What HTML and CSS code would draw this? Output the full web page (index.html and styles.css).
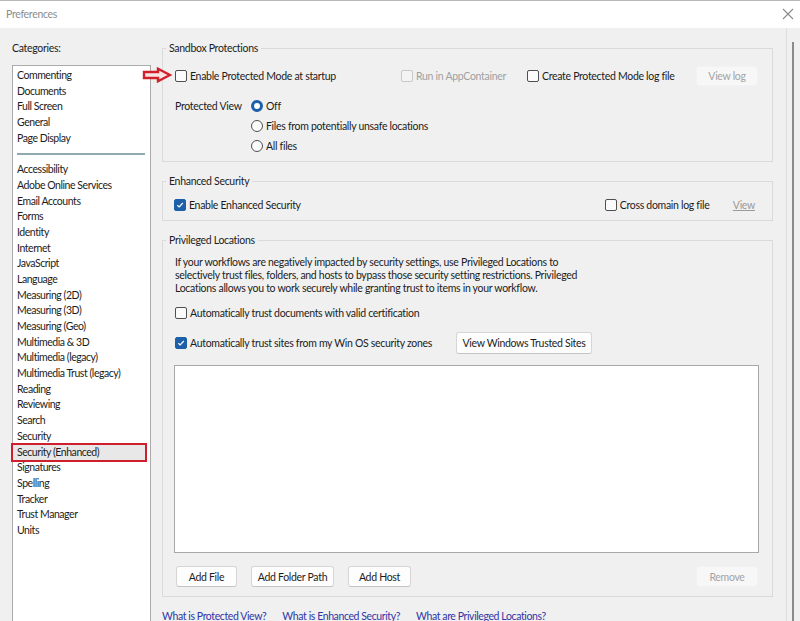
FILE: index.html
```html
<!DOCTYPE html>
<html lang="en">
<head>
  <meta charset="UTF-8">
  <meta name="viewport" content="width=device-width, initial-scale=1.0">
  <title>Preferences</title>
  <link rel="stylesheet" href="styles.css">
</head>
<body>
  <div class="window">
    <div class="titleBar">
      <span class="title">Preferences</span>
      <svg class="closeIcon" width="12" height="12" viewBox="0 0 12 12">
        <path d="M1 1L11 11M11 1L1 11" stroke="#8a8a8a" stroke-width="1.1" fill="none"/>
      </svg>
    </div>

    <div class="content">
      <div class="sidebar">
        <div class="catLabel">Categories:</div>
        <ul class="catList">
          <li>Commenting</li>
          <li>Documents</li>
          <li>Full Screen</li>
          <li>General</li>
          <li>Page Display</li>
          <li class="sep"></li>
          <li>Accessibility</li>
          <li>Adobe Online Services</li>
          <li>Email Accounts</li>
          <li>Forms</li>
          <li>Identity</li>
          <li>Internet</li>
          <li>JavaScript</li>
          <li>Language</li>
          <li>Measuring (2D)</li>
          <li>Measuring (3D)</li>
          <li>Measuring (Geo)</li>
          <li>Multimedia &amp; 3D</li>
          <li>Multimedia (legacy)</li>
          <li>Multimedia Trust (legacy)</li>
          <li>Reading</li>
          <li>Reviewing</li>
          <li>Search</li>
          <li>Security</li>
          <li class="selected">Security (Enhanced)</li>
          <li>Signatures</li>
          <li>Spelling</li>
          <li>Tracker</li>
          <li>Trust Manager</li>
          <li>Units</li>
        </ul>
      </div>

      <div class="main">
        <!-- sandbox -->
        <fieldset class="group sandbox">
          <legend>Sandbox Protections</legend>
          <div class="row startRow">
            <svg class="arrowMark" width="30" height="16" viewBox="0 0 30 16">
              <path d="M2 5H16V1.8L28 8L16 14.2V11H2Z" fill="#f7e4e4" stroke="#d2202a" stroke-width="2.4" stroke-linejoin="miter"/>
            </svg>
            <label class="check colA"><span class="box"></span>Enable Protected Mode at startup</label>
            <label class="check colB disabled"><span class="box"></span>Run in AppContainer</label>
            <label class="check colC"><span class="box"></span>Create Protected Mode log file</label>
            <button class="btn disabled logBtn">View log</button>
          </div>
          <div class="viewRow">
            <span class="viewLabel">Protected View</span>
            <div class="radios">
              <label class="radio on"><span class="dot"></span>Off</label>
              <label class="radio"><span class="dot"></span>Files from potentially unsafe locations</label>
              <label class="radio"><span class="dot"></span>All files</label>
            </div>
          </div>
        </fieldset>

        <!-- enhanced security -->
        <fieldset class="group enhanced">
          <legend>Enhanced Security</legend>
          <div class="row">
            <label class="check on grow"><span class="box"></span>Enable Enhanced Security</label>
            <label class="check crossLog"><span class="box"></span>Cross domain log file</label>
            <a class="viewLink">View</a>
          </div>
        </fieldset>

        <!-- privileged locations -->
        <fieldset class="group privileged">
          <legend>Privileged Locations</legend>
          <p class="intro">If your workflows are negatively impacted by security settings, use Privileged Locations to<br>
            selectively trust files, folders, and hosts to bypass those security setting restrictions. Privileged<br>
            Locations allows you to work securely while granting trust to items in your workflow.</p>
          <div class="row certRow">
            <label class="check"><span class="box"></span>Automatically trust documents with valid certification</label>
          </div>
          <div class="row sitesRow">
            <label class="check on sitesCheck"><span class="box"></span>Automatically trust sites from my Win OS security zones</label>
            <button class="btn sitesBtn">View Windows Trusted Sites</button>
          </div>
          <div class="locList"></div>
          <div class="row btnRow">
            <button class="btn addFile">Add File</button>
            <button class="btn addFolder">Add Folder Path</button>
            <button class="btn addHost">Add Host</button>
            <button class="btn disabled removeBtn">Remove</button>
          </div>
        </fieldset>

        <div class="links">
          <a>What is Protected View?</a>
          <a>What is Enhanced Security?</a>
          <a>What are Privileged Locations?</a>
        </div>
      </div>

      <div class="edge"></div>
    </div>
  </div>
</body>
</html>
```

FILE: styles.css
```css
* {
  box-sizing: border-box;
}
html, body {
  margin: 0;
  height: 100%;
}
body {
  font-family: Lato, "Noto Sans", sans-serif;
  font-size: 10.5px;
  letter-spacing: -0.3px;
  color: #1c1c1c;
  background: #f0f0f0;
  overflow: hidden;
}
.window {
  width: 800px;
  height: 621px;
  display: flex;
  flex-direction: column;
  background: #f0f0f0;
}
.titleBar {
  height: 28px;
  flex: none;
  background: #fff;
  border-top: 1px solid #b8b8b8;
  display: flex;
  align-items: center;
  justify-content: space-between;
  padding: 0 6px 1px;
}
.title {
  color: #8c8c8c;
}
.content {
  flex: 1;
  display: flex;
  min-height: 0;
}

/* categories */
.sidebar {
  width: 151px;
  flex: none;
  padding-left: 12px;
  display: flex;
  flex-direction: column;
}
.catLabel {
  height: 37px;
  padding-top: 13px;
  line-height: 14px;
}
.catList {
  list-style: none;
  margin: 0;
  padding: 2px 0 0;
  flex: 1;
  background: #fff;
  border: 1px solid #ababab;
  border-bottom: none;
  letter-spacing: -0.45px;
}
.catList li {
  height: 15.7px;
  line-height: 15.7px;
  padding-left: 4px;
  margin-right: 5px;
  white-space: nowrap;
}
.catList li.sep {
  display: flex;
  align-items: center;
}
.catList li.sep::after {
  content: "";
  flex: 1;
  height: 2px;
  background: #8eaab0;
}
.catList li.selected {
  background: #e8e8e8;
  outline: 2px solid #cf1f2c;
  outline-offset: 0;
}

/* right side */
.main {
  flex: 1;
  padding: 13px 13px 0 11px;
  display: flex;
  flex-direction: column;
  gap: 12px;
}
.group {
  margin: 0;
  padding: 0 12px;
  min-width: 0;
  border: 1px solid #dadada;
}
.group legend {
  margin-left: -9px;
  padding: 0 3px;
  line-height: 14px;
}
.row {
  display: flex;
  align-items: center;
}
.sandbox {
  padding-top: 10px;
  padding-bottom: 5px;
}
.startRow {
  position: relative;
  height: 21px;
}
.arrowMark {
  position: absolute;
  left: -33px;
  top: 2px;
}
.colA {
  width: 226px;
}
.colB {
  width: 126px;
}
.colC {
  flex: 1;
}
.logBtn {
  width: 62px;
  height: 20px;
  margin-right: 2px;
}
.viewRow {
  display: flex;
  margin-top: 10px;
}
.viewLabel {
  width: 76px;
  line-height: 20px;
}
.radios {
  display: flex;
  flex-direction: column;
}

/* checkbox and radio */
.check, .radio {
  display: flex;
  align-items: center;
  gap: 3px;
  height: 20px;
  white-space: nowrap;
}
.check .box {
  width: 12px;
  height: 12px;
  border: 1px solid #505050;
  border-radius: 2px;
  background: #fbfbfb;
  flex: none;
}
.check.on .box {
  border-color: #1d5fa9;
  background: #1d5fa9 url("data:image/svg+xml;utf8,<svg xmlns='http://www.w3.org/2000/svg' width='10' height='10' viewBox='0 0 10 10'><path d='M2.3 5.2L4.2 7L7.8 3' stroke='white' stroke-width='1.2' fill='none'/></svg>") center no-repeat;
}
.check.disabled {
  color: #a0a0a0;
}
.check.disabled .box {
  border-color: #c8c8c8;
  background: #f3f3f3;
}
.radio .dot {
  width: 12px;
  height: 12px;
  border: 1px solid #505050;
  border-radius: 50%;
  background: #fbfbfb;
  flex: none;
}
.radio.on .dot {
  border: 3.5px solid #1d5fa9;
  background: #fff;
}

/* buttons */
.btn {
  font: inherit;
  letter-spacing: inherit;
  color: #1c1c1c;
  background: #fdfdfd;
  border: 1px solid #d6d6d6;
  border-bottom-color: #c4c4c4;
  border-radius: 3px;
  padding: 0;
}
.btn.disabled {
  color: #a3a3a3;
  background: #f7f7f7;
  border-color: #f2f2f2;
}

.enhanced {
  padding-top: 7px;
  padding-bottom: 5px;
}
.enhanced .row {
  height: 20px;
}
.enhanced .check.on {
  margin-left: -1px;
}
.grow {
  flex: 1;
}
.crossLog {
  width: 128px;
}
.viewLink {
  color: #9a9a9a;
  text-decoration: underline;
  margin-right: 5px;
}

.privileged {
  padding-top: 9px;
  padding-bottom: 9px;
}
.intro {
  margin: 0;
  line-height: 13px;
}
.certRow {
  margin-top: 8px;
}
.sitesRow {
  margin-top: 9px;
  height: 22px;
}
.sitesCheck {
  width: 281px;
}
.sitesBtn {
  width: 136px;
  height: 22px;
}
.locList {
  margin-top: 11px;
  margin-left: -1px;
  height: 188px;
  background: #fff;
  border: 1px solid #a8a8a8;
  margin-right: 1px;
}
.btnRow {
  margin-top: 13px;
  gap: 14px;
}
.btnRow .btn {
  height: 21px;
}
.addFile {
  width: 61px;
  margin-left: 1px;
}
.addFolder {
  width: 83px;
}
.addHost {
  width: 63px;
}
.removeBtn {
  width: 62px;
  margin-left: auto;
  margin-right: 2px;
}

.links {
  display: flex;
  gap: 16px;
  margin-top: 1px;
  line-height: 12px;
  letter-spacing: -0.4px;
}
.links a {
  color: #2f35a6;
  text-decoration: underline;
}

.edge {
  width: 14px;
  flex: none;
  border-left: 1px solid #dedede;
  padding: 14px 0 0 5px;
}
.edge::after {
  content: "";
  display: block;
  width: 2px;
  height: 100%;
  background: #8a8a8a;
}
```
